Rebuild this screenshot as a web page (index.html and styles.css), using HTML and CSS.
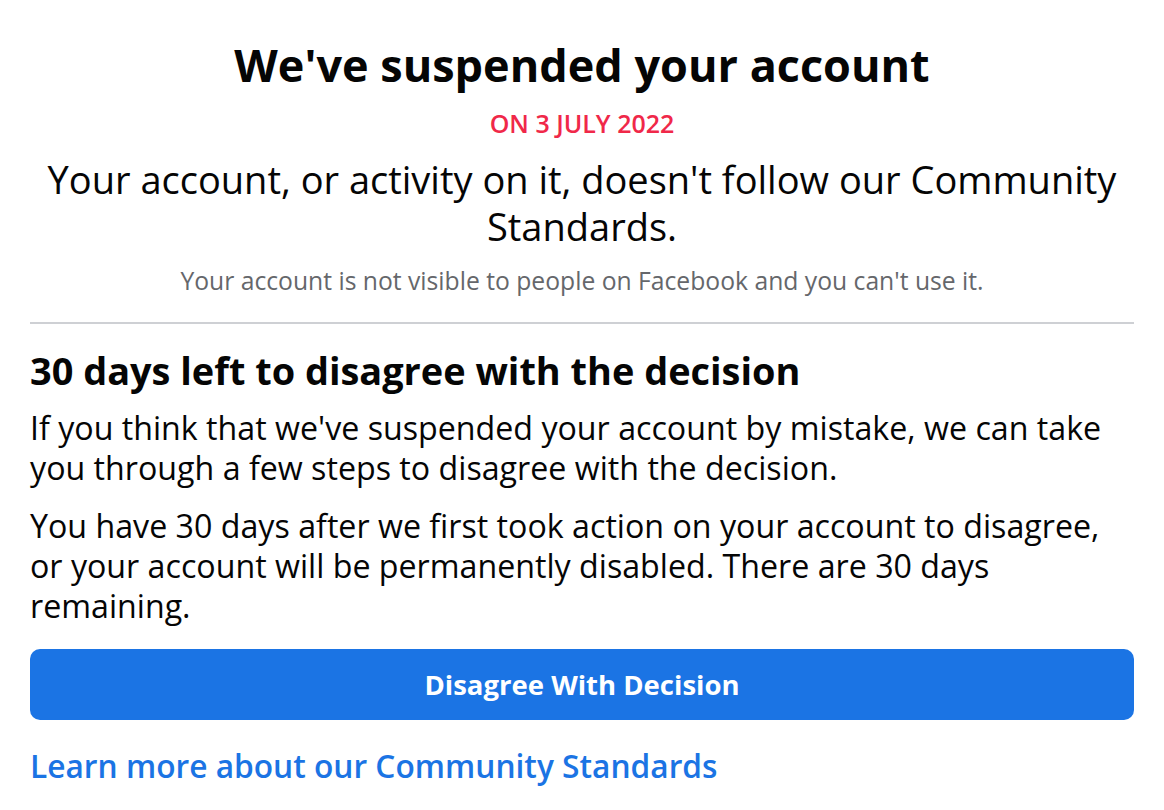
FILE: index.html
```html
<!DOCTYPE html>
<html lang="en">
<head>
<meta charset="utf-8">
<title>We've suspended your account</title>
<link rel="stylesheet" href="styles.css">
</head>
<body>
<main class="page">
  <header class="intro">
    <h1 class="title">We've suspended your account</h1>
    <div class="date">ON 3 JULY 2022</div>
    <p class="lead">Your account, or activity on it, doesn't follow our Community Standards.</p>
    <p class="note">Your account is not visible to people on Facebook and you can't use it.</p>
  </header>
  <hr class="divider">
  <section class="appeal">
    <h2 class="heading">30 days left to disagree with the decision</h2>
    <p class="body first">If you think that we've suspended your account by mistake, we can take you through a few steps to disagree with the decision.</p>
    <p class="body second">You have 30 days after we first took action on your account to disagree, or your account will be permanently disabled. There are 30 days remaining.</p>
    <button class="btn" type="button">Disagree With Decision</button>
    <a class="link" href="#">Learn more about our Community Standards</a>
  </section>
</main>
</body>
</html>
```

FILE: styles.css
```css
* { box-sizing: border-box; }
html, body { margin: 0; padding: 0; background: #ffffff; }
body {
  font-family: "Open Sans", "Noto Sans", "Liberation Sans", sans-serif;
  color: #050505;
}
.page {
  padding: 35px 30px 0;
}
.intro { text-align: center; }
.title {
  margin: 0;
  font-size: 45px;
  line-height: 60px;
  font-weight: 700;
}
.date {
  margin-top: 12px;
  font-size: 25px;
  line-height: 32px;
  font-weight: 600;
  color: #f02849;
}
.lead {
  margin: 17px 0 0;
  font-size: 38px;
  line-height: 47px;
  font-weight: 400;
}
.note {
  margin: 15px 0 0;
  font-size: 24.7px;
  line-height: 32px;
  color: #65676b;
}
.divider {
  margin: 25px 0 0;
  border: 0;
  height: 2px;
  background: #ced0d4;
}
.heading {
  margin: 24px 0 0;
  font-size: 37.9px;
  line-height: 44px;
  font-weight: 700;
}
.body {
  margin: 0;
  font-size: 32.2px;
  line-height: 40px;
}
.first { margin-top: 16px; }
.second { margin-top: 18px; }
.btn {
  display: block;
  width: 100%;
  height: 71px;
  margin-top: 23px;
  border: 0;
  border-radius: 10px;
  background: #1b74e4;
  color: #ffffff;
  font-family: inherit;
  font-size: 27.5px;
  font-weight: 700;
  cursor: pointer;
}
.link {
  display: block;
  margin-top: 26px;
  font-size: 31.7px;
  line-height: 40px;
  font-weight: 600;
  color: #1b74e4;
  text-decoration: none;
}
```
